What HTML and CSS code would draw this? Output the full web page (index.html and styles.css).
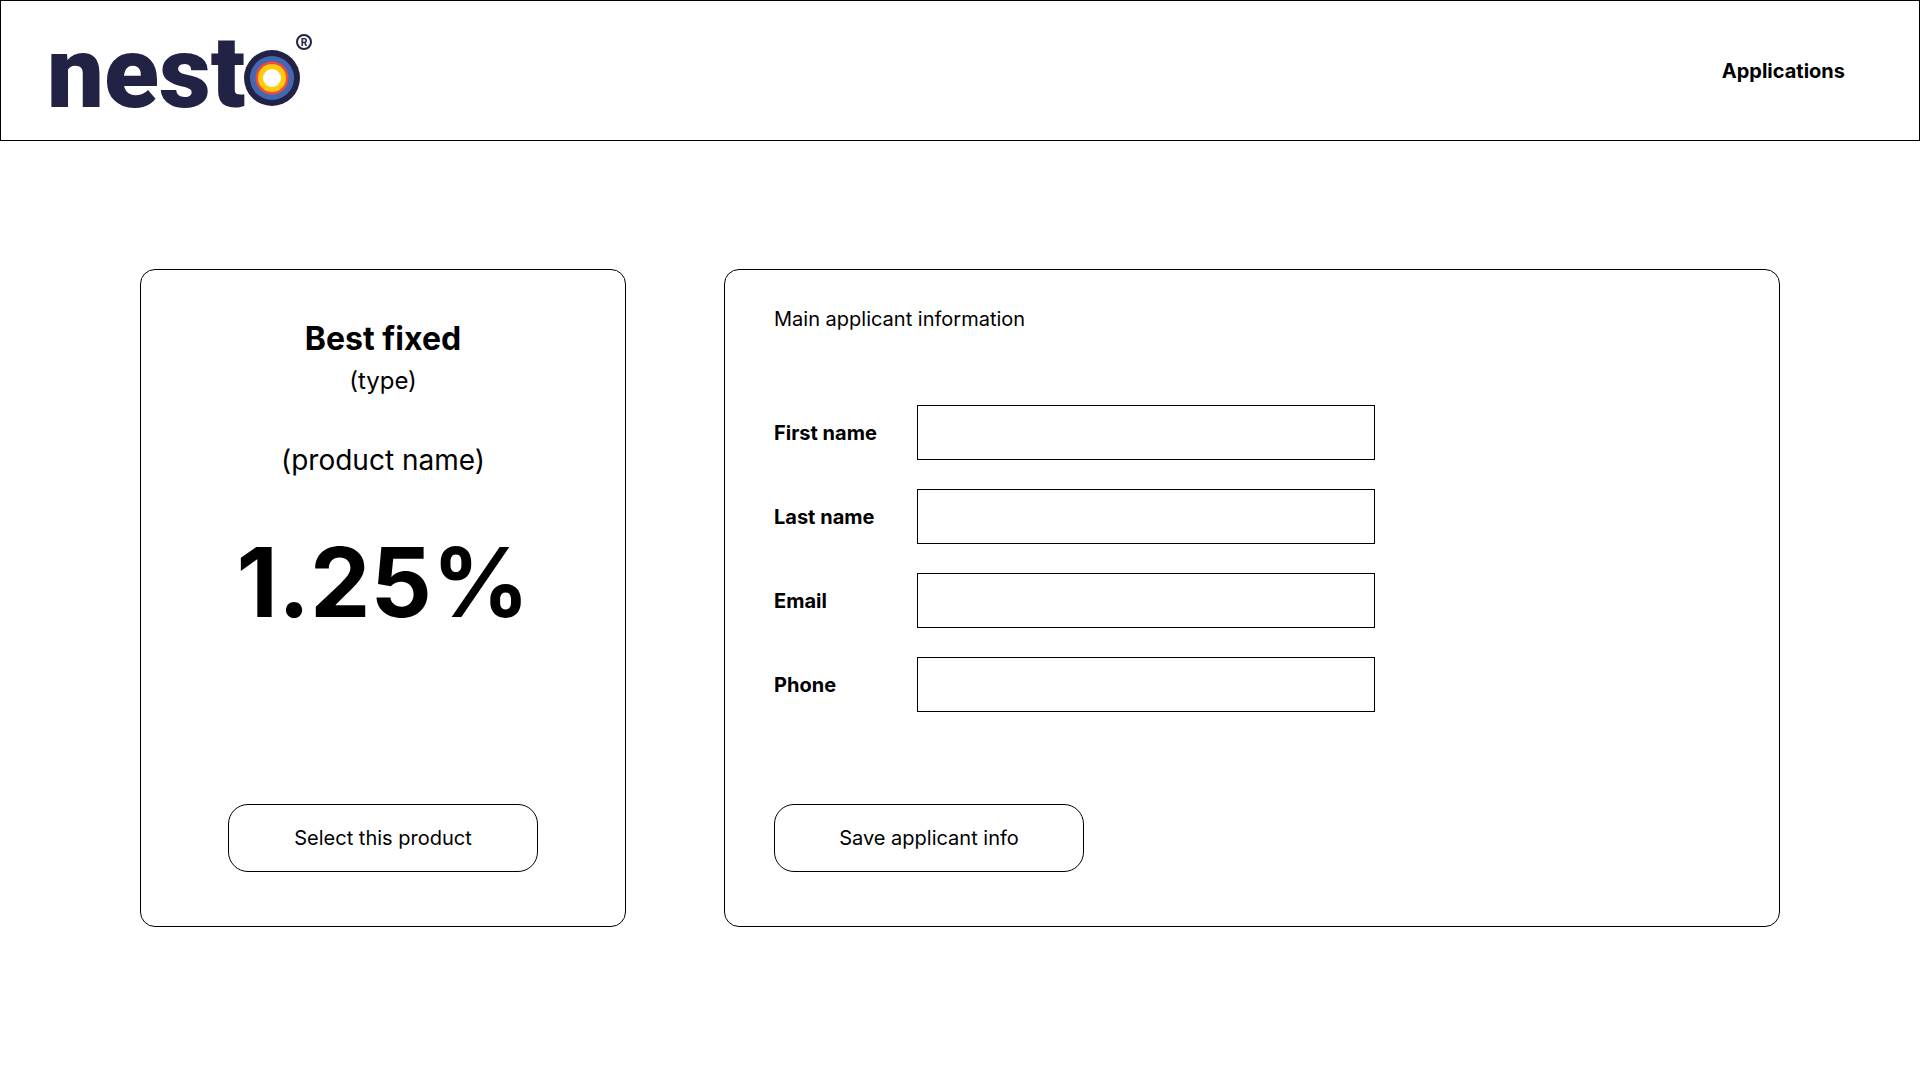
FILE: index.html
```html
<!DOCTYPE html>
<html lang="en">
<head>
  <meta charset="utf-8">
  <meta name="viewport" content="width=device-width, initial-scale=1">
  <title>nesto – Applications</title>
  <link rel="stylesheet" href="styles.css">
</head>
<body>
  <header class="site-header">
    <a class="logo" href="#">
      <svg class="logo-image" viewBox="0 0 264 75" role="img" aria-label="nesto">
        <text class="logo-word" x="-3" y="74">nest</text>
        <circle cx="222" cy="45" r="28" fill="#212244"/>
        <circle cx="222" cy="45" r="22" fill="#4268b3"/>
        <circle cx="222" cy="45" r="16.5" fill="#f04b3c"/>
        <circle cx="222" cy="45" r="14" fill="#ffcb0a"/>
        <circle cx="222" cy="45" r="9" fill="#fff"/>
        <circle cx="254" cy="9" r="7" fill="none" stroke="#212244" stroke-width="2"/>
        <text class="logo-mark" x="254" y="13" text-anchor="middle">R</text>
      </svg>
    </a>
    <nav>
      <a class="nav-link" href="#">Applications</a>
    </nav>
  </header>

  <main class="content">
    <section class="card product">
      <h1 class="product-title">Best fixed</h1>
      <p class="product-type">(type)</p>
      <p class="product-name">(product name)</p>
      <p class="product-rate">1.25%</p>
      <button class="button" type="button">Select this product</button>
    </section>

    <form class="card applicant">
      <h2 class="applicant-title">Main applicant information</h2>
      <div class="fields">
        <div class="field">
          <label for="first-name">First name</label>
          <input id="first-name" type="text">
        </div>
        <div class="field">
          <label for="last-name">Last name</label>
          <input id="last-name" type="text">
        </div>
        <div class="field">
          <label for="email">Email</label>
          <input id="email" type="email">
        </div>
        <div class="field">
          <label for="phone">Phone</label>
          <input id="phone" type="tel">
        </div>
      </div>
      <button class="button" type="button">Save applicant info</button>
    </form>
  </main>
</body>
</html>
```

FILE: styles.css
```css
*,
*::before,
*::after {
  box-sizing: border-box;
}

body {
  margin: 0;
  background: #fff;
  color: #000;
  font-family: Inter, "Liberation Sans", sans-serif;
  font-size: 20px;
  line-height: 24px;
}

h1,
h2,
p {
  margin: 0;
}

.site-header {
  display: flex;
  align-items: center;
  justify-content: space-between;
  padding: 32px 74px 32px 49px;
  border: 1px solid #000;
}

.logo,
.logo-image {
  display: block;
}

.logo-image {
  width: 264px;
  height: 75px;
  overflow: visible;
}

.logo-word {
  fill: #212244;
  font-family: Roboto, sans-serif;
  font-size: 101px;
  font-weight: 900;
}

.logo-mark {
  fill: #212244;
  font-size: 10px;
  font-weight: 700;
}

.nav-link {
  color: inherit;
  font-weight: 700;
  text-decoration: none;
}

.content {
  display: grid;
  grid-template-columns: 81fr 176fr;
  gap: 98px;
  padding: 128px 140px;
}

.card {
  display: flex;
  flex-direction: column;
  border: 1px solid #000;
  border-radius: 15px;
}

.product {
  align-items: center;
  padding: 49px 49px 54px;
  text-align: center;
}

.product-title {
  font-size: 32px;
  font-weight: 700;
  line-height: 39px;
}

.product-type {
  margin-top: 8px;
  font-size: 24px;
  line-height: 29px;
}

.product-name {
  margin-top: 48px;
  font-size: 28px;
  line-height: 34px;
}

.product-rate {
  margin-top: 47px;
  font-size: 96px;
  font-weight: 700;
  line-height: 116px;
}

.product .button {
  margin-top: auto;
}

.applicant {
  align-items: flex-start;
  padding: 37px 49px 54px;
}

.applicant-title {
  font-size: 20px;
  font-weight: 400;
}

.fields {
  display: grid;
  gap: 29px;
  width: 100%;
  margin: 74px 0 92px;
}

.field {
  display: grid;
  grid-template-columns: 143px minmax(0, 458px);
  align-items: center;
}

.field label {
  font-weight: 700;
}

.field input {
  width: 100%;
  height: 55px;
  padding: 0 16px;
  border: 1px solid #000;
  border-radius: 0;
  background: #fff;
  font: inherit;
}

.button {
  width: 310px;
  max-width: 100%;
  padding: 21px 16px;
  border: 1px solid #000;
  border-radius: 20px;
  background: #fff;
  color: inherit;
  font: inherit;
}
```
